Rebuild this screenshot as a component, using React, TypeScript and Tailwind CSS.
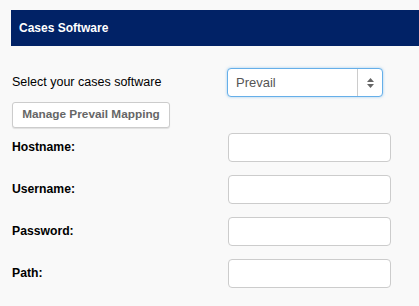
export default function App() {
  const fields = ["Hostname:", "Username:", "Password:", "Path:"];

  return (
    <div className="min-h-screen bg-[#f9f9f9] pt-[10px] pl-[11px] font-['Liberation_Sans',Arial,sans-serif] text-[12px] text-black">
      <div className="h-[36px] bg-[#012266] flex items-center pl-[8px]">
        <span className="text-white font-bold text-[12px]">Cases Software</span>
      </div>

      <div className="pl-[1px] pt-[22px]">
        <div className="flex items-center">
          <label className="w-[215px] text-[12.5px]">Select your cases software</label>
          <div className="relative w-[156px] h-[29px] bg-white border border-[#66afe9] rounded-[4px] shadow-[0_0_3px_rgba(102,175,233,0.6)] flex">
            <span className="flex-1 pl-[8px] flex items-center text-[#555] text-[13px] border-r border-[#ccc]">
              Prevail
            </span>
            <span className="w-[24px] flex items-center justify-center">
              <svg width="7" height="10" viewBox="0 0 7 10">
                <path d="M3.5 0 L7 4 H0 Z" fill="#666" />
                <path d="M0 6 H7 L3.5 10 Z" fill="#666" />
              </svg>
            </span>
          </div>
        </div>

        <button className="mt-[5px] w-[158px] h-[26px] bg-white border border-[#ccc] rounded-[3px] shadow-[0_1px_1px_rgba(0,0,0,0.1)] text-[#666] font-bold text-[11.8px]">
          Manage Prevail Mapping
        </button>

        <div className="mt-[5px] flex flex-col gap-[13px]">
          {fields.map((f) => (
            <div key={f} className="flex items-center">
              <label className="w-[216px] font-bold text-[12.2px]">{f}</label>
              <input
                type="text"
                className="w-[163px] h-[29px] bg-white border border-[#ccc] rounded-[4px] outline-none"
              />
            </div>
          ))}
        </div>
      </div>
    </div>
  );
}
